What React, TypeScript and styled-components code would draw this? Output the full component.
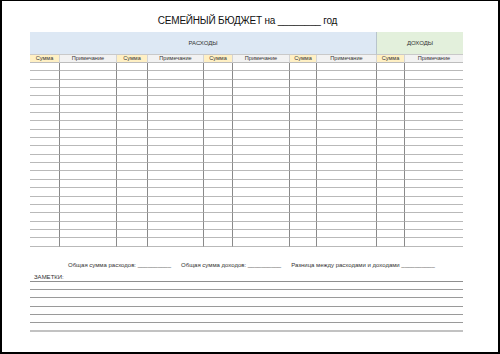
import React from "react";
import styled, { createGlobalStyle } from "styled-components";

const Global = createGlobalStyle`
  html, body { margin: 0; padding: 0; background: #fff; }
  * { box-sizing: border-box; }
`;

const Page = styled.div`
  width: 500px;
  height: 354px;
  border: 2px solid #000;
  border-top-width: 1px;
  padding: 0 35px 0 28px;
  display: flex;
  flex-direction: column;
  font-family: "Liberation Sans", Arial, sans-serif;
  color: #222;
  background: #fff;
`;

const Title = styled.div`
  height: 31px;
  padding-top: 13px;
  line-height: 13px;
  font-size: 10px;
  letter-spacing: -0.2px;
  text-align: center;
  color: #111;
  margin-right: -2px;
`;

const COLS = [30, 57, 31, 56, 29, 57, 27, 60, 28, 58];

const Grid = styled.div`
  display: grid;
  grid-template-columns: ${COLS.map((c) => c + "px").join(" ")};
  grid-template-rows: 23px 8px repeat(22, 8.35px);
  width: 433px;
`;

const Band = styled.div<{ $span: number; $bg: string; $divider?: boolean }>`
  grid-column: span ${(p) => p.$span};
  background: ${(p) => p.$bg};
  display: flex;
  align-items: center;
  justify-content: center;
  font-size: 6px;
  color: #333;
  border-right: ${(p) => (p.$divider ? "1px solid #b8c4cc" : "none")};
  border-bottom: 1px solid #c9c9c9;
`;

const HeadCell = styled.div<{ $kind: "sum" | "note"; $last?: boolean }>`
  background: ${(p) => (p.$kind === "sum" ? "#fff0c4" : "#f2f2f2")};
  display: flex;
  align-items: center;
  justify-content: center;
  font-size: 5.6px;
  line-height: 7px;
  color: #333;
  border-right: ${(p) => (p.$last ? "none" : "1px solid #d4d4d4")};
  border-bottom: 1px solid #bdbdbd;
  overflow: hidden;
  white-space: nowrap;
`;

const Cell = styled.div<{ $last?: boolean }>`
  border-bottom: 1px solid #b9b9b9;
  border-right: ${(p) => (p.$last ? "none" : "1px solid #8a8a8a")};
`;

const Totals = styled.div`
  display: flex;
  gap: 10px;
  margin-top: 13px;
  padding-left: 38px;
  font-size: 6px;
  line-height: 10px;
  color: #333;
  white-space: nowrap;
`;

const NotesLabel = styled.div`
  margin-top: 3px;
  padding-left: 4px;
  font-size: 6px;
  line-height: 8px;
  height: 9px;
  color: #333;
  border-bottom: 1px solid #8f8f8f;
  width: 433px;
`;

const NoteLine = styled.div<{ $heavy?: boolean }>`
  height: 8.35px;
  width: 433px;
  border-bottom: ${(p) => (p.$heavy ? "2px solid #c2c2c2" : "1px solid #9a9a9a")};
`;

export default function App() {
  const headers: ("sum" | "note")[] = ["sum", "note", "sum", "note", "sum", "note", "sum", "note", "sum", "note"];
  const rows = Array.from({ length: 22 });
  return (
    <>
      <Global />
      <Page>
        <Title>СЕМЕЙНЫЙ БЮДЖЕТ на ________ год</Title>
        <Grid>
          <Band $span={8} $bg="#dde8f4" $divider>
            РАСХОДЫ
          </Band>
          <Band $span={2} $bg="#e3f0dc">
            ДОХОДЫ
          </Band>
          {headers.map((h, i) => (
            <HeadCell key={"h" + i} $kind={h} $last={i === 9}>
              {h === "sum" ? "Сумма" : "Примечание"}
            </HeadCell>
          ))}
          {rows.map((_, r) =>
            COLS.map((_, c) => <Cell key={r + "-" + c} $last={c === 9} />)
          )}
        </Grid>
        <Totals>
          <span>Общая сумма расходов: __________</span>
          <span>Общая сумма доходов: __________</span>
          <span>Разница между расходами и доходами __________</span>
        </Totals>
        <NotesLabel>ЗАМЕТКИ:</NotesLabel>
        {Array.from({ length: 6 }).map((_, i) => (
          <NoteLine key={i} $heavy={i === 5} />
        ))}
      </Page>
    </>
  );
}
